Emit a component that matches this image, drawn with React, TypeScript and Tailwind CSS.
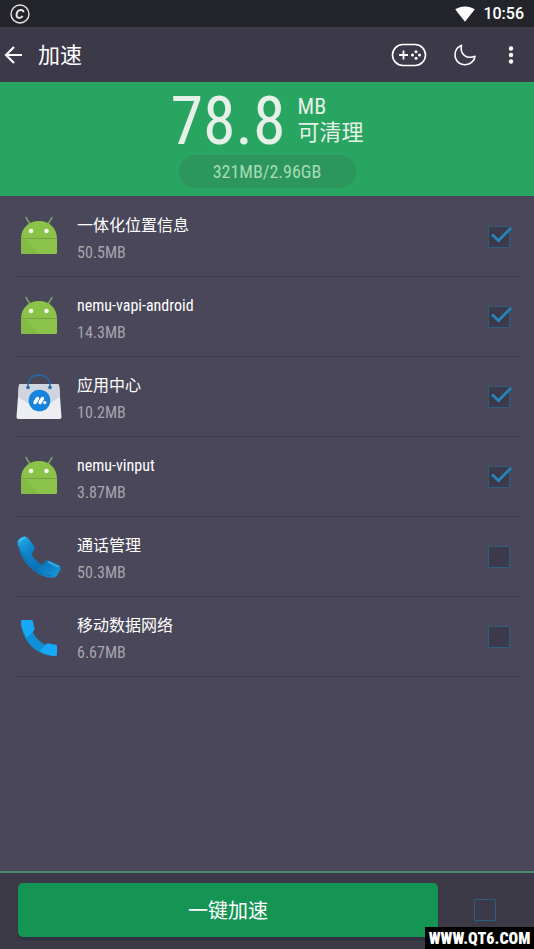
import { useState } from 'react';

type IconKind = 'android' | 'store' | 'handset' | 'phone';

interface AppItem {
  id: string;
  name: string;
  size: string;
  icon: IconKind;
  checked: boolean;
}

const initialApps: AppItem[] = [
  { id: 'location', name: '一体化位置信息', size: '50.5MB', icon: 'android', checked: true },
  { id: 'vapi', name: 'nemu-vapi-android', size: '14.3MB', icon: 'android', checked: true },
  { id: 'store', name: '应用中心', size: '10.2MB', icon: 'store', checked: true },
  { id: 'vinput', name: 'nemu-vinput', size: '3.87MB', icon: 'android', checked: true },
  { id: 'calls', name: '通话管理', size: '50.3MB', icon: 'handset', checked: false },
  { id: 'mobile', name: '移动数据网络', size: '6.67MB', icon: 'phone', checked: false },
];

function AndroidIcon() {
  return (
    <svg viewBox="0 0 46 46" className="h-[46px] w-[46px]" aria-hidden="true">
      <path d="M10 3.500 14 10M36 3.500 32 10" stroke="#7f9f6b" strokeWidth="1.500" strokeLinecap="round" />
      <path d="M5 25C5 14 12.500 7 23 7S41 14 41 25Z" fill="#8bc34a" />
      <path d="M5 25H41V38.500a1.500 1.500 0 0 1-1.500 1.500H6.500A1.500 1.500 0 0 1 5 38.500Z" fill="#8bc34a" />
      <path d="M5 25.500H10L22 40H6.500A1.500 1.500 0 0 1 5 38.500Z" fill="#7cb342" opacity=".5" />
      <path d="M5 24.500H41" stroke="#75a343" strokeWidth="1" />
      <circle cx="15" cy="17" r="2.300" fill="#f1f8e9" />
      <circle cx="30.500" cy="17" r="2.300" fill="#f1f8e9" />
    </svg>
  );
}

function StoreIcon() {
  return (
    <svg viewBox="0 0 46 46" className="h-[46px] w-[46px]" aria-hidden="true">
      <path d="M4.500 10H41.500Q43 10 43.200 12L45.500 43Q45.500 45 43.500 45H2.500Q.5 45 .5 43L2.800 12Q3 10 4.500 10Z" fill="#eceef2" />
      <path d="M4.500 10H41.500Q43 10 43.200 12L44.200 23 23 36 1.900 23 2.800 12Q3 10 4.500 10Z" fill="#cfd4de" />
      <path d="M12 14V11C12 5 16.500 1 23 1S34 5 34 11V14" fill="none" stroke="#246ba4" strokeWidth="1.500" />
      <circle cx="12" cy="13.500" r="1.800" fill="#2869a3" />
      <circle cx="34" cy="13.500" r="1.800" fill="#2869a3" />
      <circle cx="23.500" cy="26.500" r="10.800" fill="#1683dc" />
      <path d="M19 28.500 21.500 24.500M24 28.500 26.500 24.500" stroke="#fff" strokeWidth="3.400" strokeLinecap="round" />
      <circle cx="28.800" cy="28.600" r="1.600" fill="#fff" />
    </svg>
  );
}

function HandsetIcon() {
  return (
    <svg viewBox="0 0 46 46" className="h-[46px] w-[46px]" aria-hidden="true">
      <defs>
        <linearGradient id="handset" x1="0" y1="0" x2="1" y2="1">
          <stop offset="0" stopColor="#2bb2ec" />
          <stop offset=".3" stopColor="#0e86cb" />
          <stop offset=".6" stopColor="#0a74b8" />
          <stop offset="1" stopColor="#1c9ae0" />
        </linearGradient>
      </defs>
      <path
        d="M1.500 7Q4 3 9 2.200L12 4 18.300 12.500Q18.800 14.500 17.800 16.500L15.500 20.500Q19 27 26.500 31L29 27.500Q30.500 25.800 33 26.500L43.500 31.500Q45.500 33 44.500 35.500L41 41.500Q39 44 35 43.800 25 43.500 15 34.500 6 26 2.500 13.500 1 9.500 1.500 7Z"
        fill="url(#handset)"
      />
      <path d="M3 12Q7 24 16 33 25 41 36 42" fill="none" stroke="#0b629f" strokeWidth="1.500" opacity=".45" />
      <path d="M3.500 7.200Q5.800 4.400 8.800 3.900M32.500 28 42 32.600" fill="none" stroke="#69d0f5" strokeWidth="1.600" strokeLinecap="round" opacity=".6" />
    </svg>
  );
}

function PhoneIcon() {
  return (
    <svg viewBox="0 0 46 46" className="h-[46px] w-[46px]" aria-hidden="true">
      <path d="M5 7C5 26 20 42 39.500 42L30 31Q21 27 16 17Z" fill="#0f8fd4" />
      <path d="M6.500 6H15.500Q17 6 17.200 7.500 17.300 11 18.400 14.500 18.700 16 17.800 17L11 23.500Q5 15 5 7.500 5 6 6.500 6Z" fill="#16a9f5" />
      <path d="M23.500 37 30.500 30Q31.500 29 33 29.500 36 30.400 39.500 30.400 41 30.500 41 32V40.500Q41 42 39.500 42 31 42 23.500 37Z" fill="#16a9f5" />
    </svg>
  );
}

const icons: Record<IconKind, () => React.JSX.Element> = {
  android: AndroidIcon,
  store: StoreIcon,
  handset: HandsetIcon,
  phone: PhoneIcon,
};

interface CheckProps {
  id: string;
  label?: string;
  checked: boolean;
  onChange: () => void;
}

function CheckBox({ id, label, checked, onChange }: CheckProps) {
  return (
    <span className="relative block h-[22px] w-[22px] shrink-0">
      <input
        id={id}
        type="checkbox"
        aria-label={label}
        checked={checked}
        onChange={onChange}
        className="block h-[22px] w-[22px] cursor-pointer appearance-none rounded-[1px] border border-[#2b5f80] bg-[#3c3a4a]"
      />
      {checked && (
        <svg viewBox="0 0 26 22" className="pointer-events-none absolute top-0 left-0 h-[22px] w-[26px]" aria-hidden="true">
          <path d="m4 8.500 6.500 6L23 2" fill="none" stroke="#2585b9" strokeWidth="2.800" />
        </svg>
      )}
    </span>
  );
}

function StatusBar() {
  return (
    <div className="flex h-[27px] items-center justify-between bg-[#24252b] pr-2.5 pl-[10px] text-white">
      <svg viewBox="0 0 20 20" className="h-5 w-5" fill="none" stroke="#e6e6e8" aria-hidden="true">
        <circle cx="10" cy="10" r="9" strokeWidth="1.400" />
        <path d="M13.500 8.300C13.400 6.700 12.300 5.900 10.700 5.900 8.200 5.900 6.700 8.300 6.600 10.900 6.500 12.900 7.500 14 9.200 14 10.800 14 11.900 13.200 12.500 11.800" strokeWidth="2" />
      </svg>
      <div className="flex items-center gap-2">
        <svg viewBox="0 0 20 16" className="h-4 w-5" fill="#fff" aria-hidden="true">
          <path d="M10 15.800.3 3.600C5.500-.7 14.500-.7 19.700 3.600Z" />
        </svg>
        <span className="pt-px font-[Roboto] text-base font-medium">10:56</span>
      </div>
    </div>
  );
}

function Header() {
  return (
    <header className="flex h-[55px] items-center justify-between bg-[#3c3a48] pr-[11px] pl-1 text-white">
      <div className="flex items-center gap-[14px]">
        <button type="button" aria-label="返回" className="cursor-pointer">
          <svg viewBox="0 0 20 20" className="h-5 w-5" fill="none" stroke="currentColor" strokeWidth="2.200" aria-hidden="true">
            <path d="M18 10H3M10 2 2 10 10 18" />
          </svg>
        </button>
        <h1 className="pt-0.5 text-[22px]">加速</h1>
      </div>
      <div className="flex items-center">
        <button type="button" aria-label="游戏加速" className="mr-[26px] cursor-pointer">
          <svg viewBox="0 0 36 24" className="h-6 w-9" fill="none" stroke="currentColor" aria-hidden="true">
            <rect x="1.500" y="1.500" width="33" height="21" rx="10.500" strokeWidth="1.600" />
            <path d="M12.500 7.500V16.500M8 12H17" strokeWidth="1.800" />
            <g fill="currentColor" stroke="none">
              <circle cx="25" cy="8.800" r="1.500" />
              <circle cx="25" cy="15.200" r="1.500" />
              <circle cx="21.500" cy="12" r="1.500" />
              <circle cx="28.500" cy="12" r="1.500" />
            </g>
          </svg>
        </button>
        <button type="button" aria-label="夜间模式" className="mr-[22px] cursor-pointer">
          <svg viewBox="0 0 24 24" className="h-6 w-6" fill="none" stroke="currentColor" strokeWidth="1.600" strokeLinejoin="round" aria-hidden="true">
            <path d="M8.500 2.300C3.800 4.500 1 9 2.200 14 3.300 19 7.500 22 12.300 21.800 17.500 21.500 21.500 18 22 13.300 13.500 16.500 6.500 11 8.500 2.300Z" />
          </svg>
        </button>
        <button type="button" aria-label="更多" className="cursor-pointer">
          <svg viewBox="0 0 24 24" className="h-6 w-6" fill="currentColor" aria-hidden="true">
            <circle cx="12" cy="5.500" r="2.200" />
            <circle cx="12" cy="12" r="2.200" />
            <circle cx="12" cy="18.500" r="2.200" />
          </svg>
        </button>
      </div>
    </header>
  );
}

export default function App() {
  const [apps, setApps] = useState(initialApps);
  const allChecked = apps.every((app) => app.checked);

  const toggle = (id: string) =>
    setApps(apps.map((app) => (app.id === id ? { ...app, checked: !app.checked } : app)));

  const toggleAll = () => setApps(apps.map((app) => ({ ...app, checked: !allChecked })));

  return (
    <div className="relative flex min-h-screen flex-col bg-[#494759] font-['Roboto_Condensed','Liberation_Sans_Narrow',Roboto,'Noto_Sans_CJK_SC',sans-serif]">
      <StatusBar />
      <Header />

      <section className="flex h-[114px] flex-col items-center bg-[#28a561] text-[#e6f0e8]">
        <div className="flex items-center gap-3 pt-1">
          <span className="pt-1 text-[66px] leading-[64px]">78.8</span>
          <span className="text-[22px] leading-[26px]">
            MB
            <br />
            可清理
          </span>
        </div>
        <div className="mt-px flex h-[33px] w-[177px] items-center justify-center rounded-full bg-[#2c965c] pt-px text-lg text-[#a5dcb8]">
          321MB/2.96GB
        </div>
      </section>

      <ul className="flex-1 px-4 pt-px">
        {apps.map((app) => {
          const Icon = icons[app.icon];
          return (
            <li key={app.id} className="flex h-20 items-center border-b border-[#3e3c4c] pr-2">
              <Icon />
              <label htmlFor={app.id} className="ml-[15px] flex-1 cursor-pointer pt-1">
                <span className="block text-base leading-[27px] text-white">{app.name}</span>
                <span className="block text-base leading-[27px] text-[#a6a5ae]">{app.size}</span>
              </label>
              <CheckBox id={app.id} checked={app.checked} onChange={() => toggle(app.id)} />
            </li>
          );
        })}
      </ul>

      <footer className="flex h-[78px] items-start border-t-2 border-[#3f8f6c] bg-[#3c3a47] pt-2.5 pr-[38px] pl-[18px]">
        <button
          type="button"
          className="mr-9 h-[54px] flex-1 cursor-pointer rounded-[5px] bg-[#149553] pt-0.5 text-xl text-white shadow-[0_3px_2px_#30333f]"
        >
          一键加速
        </button>
        <div className="flex h-[54px] items-center">
          <CheckBox id="all" label="全选" checked={allChecked} onChange={toggleAll} />
        </div>
      </footer>

      <div className="absolute right-0 bottom-0 flex h-[22px] w-[109px] items-center justify-center bg-black pt-px text-base font-black text-white">
        WWW.QT6.COM
      </div>
    </div>
  );
}
